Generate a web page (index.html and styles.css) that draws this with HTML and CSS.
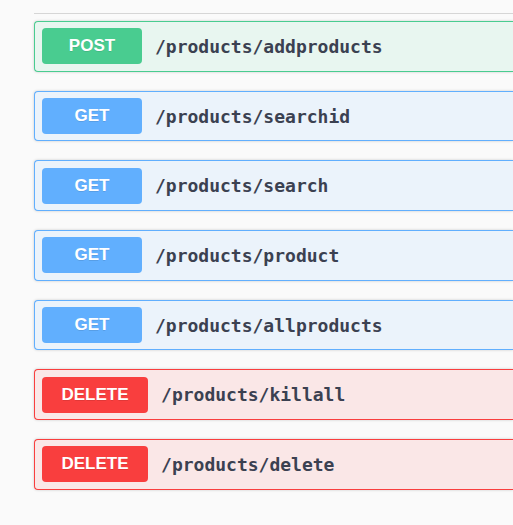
FILE: index.html
```html
<!DOCTYPE html>
<html>
<head>
<meta charset="utf-8">
<link rel="stylesheet" href="styles.css">
</head>
<body>
<div class="section">
  <div class="tag-line"></div>
  <div class="opblock post"><span class="method">POST</span><span class="path">/products/addproducts</span></div>
  <div class="opblock get"><span class="method">GET</span><span class="path">/products/searchid</span></div>
  <div class="opblock get"><span class="method">GET</span><span class="path">/products/search</span></div>
  <div class="opblock get"><span class="method">GET</span><span class="path">/products/product</span></div>
  <div class="opblock get"><span class="method">GET</span><span class="path">/products/allproducts</span></div>
  <div class="opblock delete"><span class="method">DELETE</span><span class="path">/products/killall</span></div>
  <div class="opblock delete"><span class="method">DELETE</span><span class="path">/products/delete</span></div>
</div>
</body>
</html>
```
FILE: styles.css
```css
html, body {
  margin: 0;
  padding: 0;
  background: #fafafa;
  overflow: hidden;
}
.section {
  margin-left: 34px;
  padding-top: 13px;
}
.tag-line {
  height: 0;
  border-bottom: 1px solid #d6d6d6;
  margin-bottom: 7px;
}
.opblock {
  box-sizing: border-box;
  height: 50.7px;
  display: flex;
  align-items: center;
  padding: 0 7px;
  border: 1px solid;
  border-right-width: 0;
  border-radius: 4px 0 0 4px;
  box-shadow: 0 0 3px rgba(0,0,0,.19);
  margin-bottom: 19px;
}
.method {
  box-sizing: border-box;
  min-width: 100px;
  height: 36px;
  padding: 0 19.5px;
  display: flex;
  align-items: center;
  justify-content: center;
  border-radius: 4px;
  color: #fff;
  font-family: "Liberation Sans", Arial, sans-serif;
  font-weight: bold;
  font-size: 17px;
  text-shadow: 0 1px 0 rgba(0,0,0,.1);
}
.path {
  margin-left: 13px;
  font-family: "DejaVu Sans Mono", monospace;
  font-weight: bold;
  font-size: 18px;
  color: #3b4151;
}
.post { background: #e8f6f0; border-color: #49cc90; }
.post .method { background: #49cc90; }
.get { background: #ebf3fb; border-color: #61affe; }
.get .method { background: #61affe; }
.delete { background: #fae7e7; border-color: #f93e3e; }
.delete .method { background: #f93e3e; }
```
